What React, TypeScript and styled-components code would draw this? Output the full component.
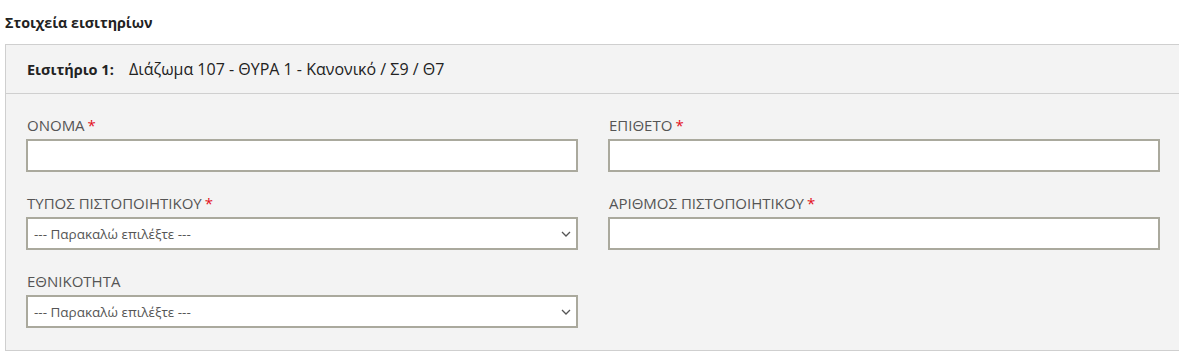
import React from 'react';
import styled, { createGlobalStyle } from 'styled-components';

const GlobalStyle = createGlobalStyle`
  body {
    margin: 0;
    background: #ffffff;
    font-family: "Open Sans", "Noto Sans", Arial, sans-serif;
    overflow: hidden;
  }
`;

interface Field {
  label: string;
  required?: boolean;
  kind: 'input' | 'select';
}

const fields: (Field | null)[] = [
  { label: 'ΟΝΟΜΑ', required: true, kind: 'input' },
  { label: 'ΕΠΙΘΕΤΟ', required: true, kind: 'input' },
  { label: 'ΤΥΠΟΣ ΠΙΣΤΟΠΟΙΗΤΙΚΟΥ', required: true, kind: 'select' },
  { label: 'ΑΡΙΘΜΟΣ ΠΙΣΤΟΠΟΙΗΤΙΚΟΥ', required: true, kind: 'input' },
  { label: 'ΕΘΝΙΚΟΤΗΤΑ', kind: 'select' },
  null,
];

const Chevron = () => (
  <svg width="10" height="6" viewBox="0 0 10 6" fill="none">
    <path d="M1 1l4 4 4-4" stroke="#555" strokeWidth="1.3" />
  </svg>
);

const App: React.FC = () => {
  return (
    <Page>
      <GlobalStyle />
      <Title>Στοιχεία εισιτηρίων</Title>
      <Panel>
        <PanelHeader>
          <TicketNo>Εισιτήριο 1:</TicketNo>
          <TicketInfo>Διάζωμα 107 - ΘΥΡΑ 1 - Κανονικό / Σ9 / Θ7</TicketInfo>
        </PanelHeader>
        <FormGrid>
          {fields.map((f, i) =>
            f ? (
              <FieldBox key={i}>
                <Label>
                  {f.label}
                  {f.required && <Star>*</Star>}
                </Label>
                {f.kind === 'input' ? (
                  <TextInput type="text" />
                ) : (
                  <SelectWrap>
                    <Select defaultValue="">
                      <option value="">--- Παρακαλώ επιλέξτε ---</option>
                    </Select>
                    <Arrow>
                      <Chevron />
                    </Arrow>
                  </SelectWrap>
                )}
              </FieldBox>
            ) : (
              <div key={i} />
            ),
          )}
        </FormGrid>
      </Panel>
    </Page>
  );
};

const Page = styled.div`
  padding-left: 5px;
  width: 1200px;
`;

const Title = styled.div`
  height: 44px;
  display: flex;
  align-items: center;
  font-size: 14.3px;
  font-weight: 700;
  color: #222;
`;

const Panel = styled.div`
  width: 1175px;
  border: 1px solid #cfcfcf;
  background: #f3f3f3;
`;

const PanelHeader = styled.div`
  height: 48px;
  display: flex;
  align-items: center;
  padding-left: 21px;
  border-bottom: 1px solid #cfcfcf;
  color: #222;
`;

const TicketNo = styled.span`
  font-size: 14.5px;
  font-weight: 700;
  width: 102px;
`;

const TicketInfo = styled.span`
  font-size: 16px;
  font-weight: 400;
`;

const FormGrid = styled.div`
  display: grid;
  grid-template-columns: 552px 552px;
  column-gap: 30px;
  row-gap: 22px;
  padding: 22px 20px 22px 20px;
`;

const FieldBox = styled.div`
  display: flex;
  flex-direction: column;
  gap: 5px;
`;

const Label = styled.div`
  font-size: 15px;
  line-height: 18px;
  color: #555;
  display: flex;
  gap: 3px;
  padding-left: 1px;
`;

const Star = styled.span`
  color: #e3101b;
`;

const TextInput = styled.input`
  box-sizing: border-box;
  height: 33px;
  width: 100%;
  border: 2px solid #aaa99d;
  background: #fff;
  outline: none;
  margin: 0;
`;

const SelectWrap = styled.div`
  position: relative;
`;

const Select = styled.select`
  box-sizing: border-box;
  appearance: none;
  height: 33px;
  width: 100%;
  border: 2px solid #aaa99d;
  border-radius: 0;
  background: #fff;
  padding: 0 6px;
  font-family: "Open Sans", "Noto Sans", Arial, sans-serif;
  font-size: 13.5px;
  color: #555;
  outline: none;
  margin: 0;
`;

const Arrow = styled.span`
  position: absolute;
  right: 7px;
  top: 14px;
  display: flex;
  pointer-events: none;
`;

export default App;
